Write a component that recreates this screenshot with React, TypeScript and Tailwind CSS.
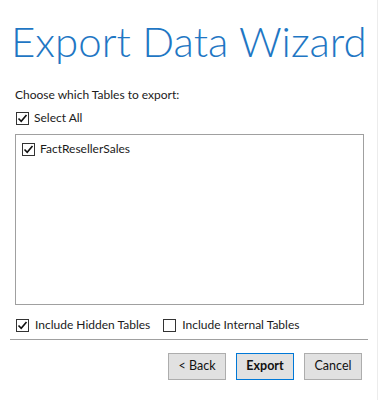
import React, { useState } from "react";

const ui = { fontFamily: 'Lato, "Open Sans", sans-serif' };

function Check({ checked, onToggle }: { checked: boolean; onToggle: () => void }) {
  return (
    <span
      onClick={onToggle}
      className="w-[13px] h-[13px] border border-[#333333] bg-white flex items-center justify-center shrink-0"
    >
      {checked && (
        <svg width="11" height="11" viewBox="0 0 11 11">
          <path d="M1.5 5.5 L4.2 8.3 L9.5 2" fill="none" stroke="#111" strokeWidth="1.6" />
        </svg>
      )}
    </span>
  );
}

function Button({ text, primary }: { text: string; primary?: boolean }) {
  return (
    <button
      className={
        "h-[27px] w-[58px] bg-[#e1e1e1] border text-[12.5px] text-[#111] " +
        (primary ? "border-[#0078d7] font-bold" : "border-[#adadad]")
      }
      style={ui}
    >
      {text}
    </button>
  );
}

export default function App() {
  const [selectAll, setSelectAll] = useState(true);
  const [fact, setFact] = useState(true);
  const [hidden, setHidden] = useState(true);
  const [internal, setInternal] = useState(false);

  return (
    <div className="w-[378px] h-[400px] bg-white border-r border-[#ececec] text-[#1b1b1b]" style={ui}>
      <div className="pt-[15px] pl-[11px] text-[42px] leading-[52px] font-light text-[#1f77c4] whitespace-nowrap">
        Export Data Wizard
      </div>

      <div className="pl-[15px] mt-[20px] text-[12px] leading-[16px]">Choose which Tables to export:</div>

      <div className="pl-[16px] mt-[8px] flex items-center gap-[5px] text-[12px] leading-[14px]">
        <Check checked={selectAll} onToggle={() => setSelectAll(!selectAll)} />
        <span>Select All</span>
      </div>

      <div className="ml-[15px] mt-[9px] w-[349px] h-[171px] border border-[#a0a0a0] pt-[7px] pl-[6px]">
        <div className="flex items-center gap-[5px] text-[12px] leading-[14px]">
          <Check checked={fact} onToggle={() => setFact(!fact)} />
          <span>FactResellerSales</span>
        </div>
      </div>

      <div className="pl-[16px] mt-[13px] flex items-center text-[12px] leading-[14px]">
        <Check checked={hidden} onToggle={() => setHidden(!hidden)} />
        <span className="ml-[6px]">Include Hidden Tables</span>
        <span className="ml-[13px]">
          <Check checked={internal} onToggle={() => setInternal(!internal)} />
        </span>
        <span className="ml-[6px]">Include Internal Tables</span>
      </div>

      <div className="ml-[10px] mt-[7px] w-[358px] border-t border-[#a0a0a0]" />

      <div className="mt-[13px] pr-[15px] flex justify-end gap-[10px]">
        <Button text="< Back" />
        <Button text="Export" primary />
        <Button text="Cancel" />
      </div>
    </div>
  );
}
